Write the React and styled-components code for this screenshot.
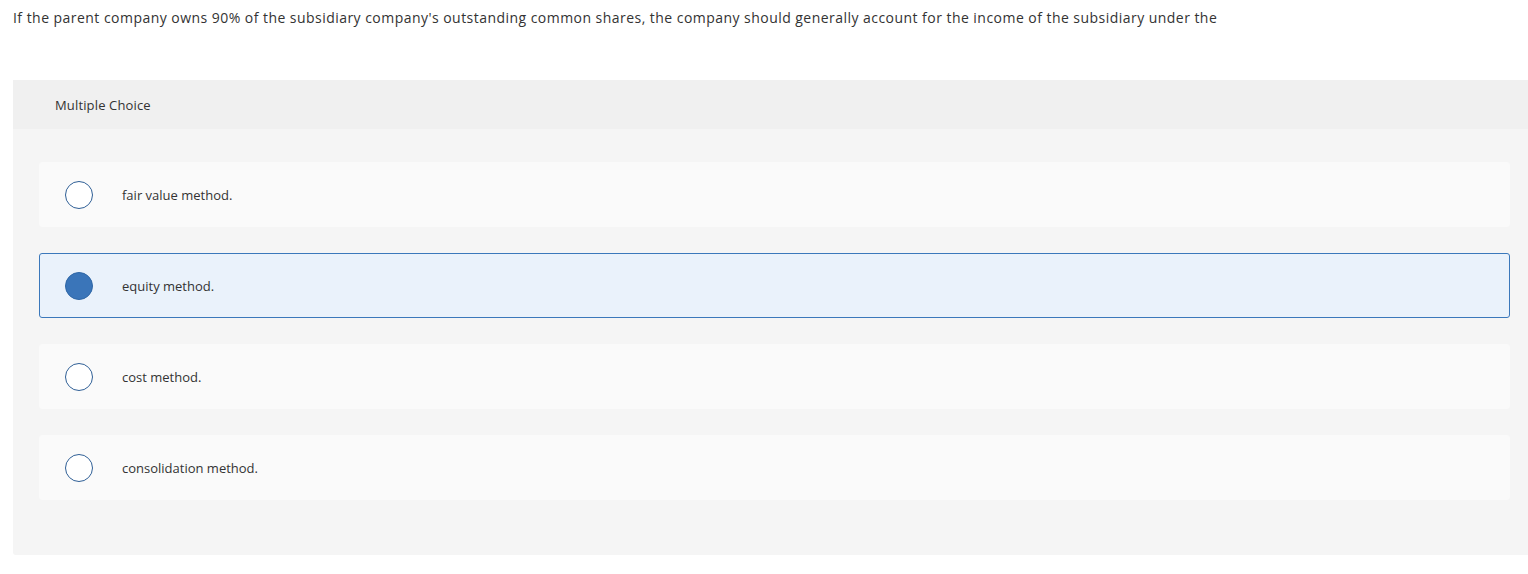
import React from 'react';
import styled, { createGlobalStyle } from "styled-components";

const options = [
    {id: 1, label: "fair value method.", selected: false},
    {id: 2, label: "equity method.", selected: true},
    {id: 3, label: "cost method.", selected: false},
    {id: 4, label: "consolidation method.", selected: false},
];

function App() {
    return (
        <Page>
            <GlobalStyle/>
            <Question>
                If the parent company owns 90% of the subsidiary company's outstanding common shares, the company should generally account for the income of the subsidiary under the
            </Question>
            <Panel>
                <PanelHeader>Multiple Choice</PanelHeader>
                <OptionList>
                    {options.map(o => (
                        <Option key={o.id} $selected={o.selected}>
                            <Radio $selected={o.selected}/>
                            <Label>{o.label}</Label>
                        </Option>
                    ))}
                </OptionList>
            </Panel>
        </Page>
    );
}

export default App;

const GlobalStyle = createGlobalStyle`
  html, body {
    margin: 0;
    padding: 0;
    background: #ffffff;
  }
  body {
    font-family: "Open Sans", "Lato", sans-serif;
    color: #333333;
  }
`;

const Page = styled.div`
  padding: 9px 0 0 13px;
  width: 1528px;
  box-sizing: border-box;
`;

const Question = styled.p`
  margin: 0;
  font-size: 14px;
  line-height: 18px;
  letter-spacing: 0.46px;
  color: #333;
`;

const Panel = styled.div`
  margin-top: 53px;
  background: #f5f5f5;
  border-radius: 0 0 0 3px;
  height: 475px;
`;

const PanelHeader = styled.div`
  height: 49px;
  background: #f0f0f0;
  display: flex;
  align-items: center;
  padding-left: 42px;
  font-size: 13px;
  letter-spacing: 0.15px;
  color: #333;
`;

const OptionList = styled.div`
  display: flex;
  flex-direction: column;
  gap: 26px;
  padding: 33px 18px 0 26px;
`;

const Option = styled.div`
  height: 65px;
  box-sizing: border-box;
  display: flex;
  align-items: center;
  padding-left: 25px;
  border-radius: 3px;
  background: ${p => p.$selected ? "#eaf2fb" : "#fafafa"};
  border: 1px solid ${p => p.$selected ? "#3b78bb" : "#fafafa"};
`;

const Radio = styled.span`
  width: 28px;
  height: 28px;
  box-sizing: border-box;
  border-radius: 50%;
  border: 1.5px solid ${p => p.$selected ? "#2f67a6" : "#2f5f96"};
  background: ${p => p.$selected ? "#3a75b9" : "#ffffff"};
  flex-shrink: 0;
`;

const Label = styled.span`
  margin-left: 29px;
  font-size: 13px;
  color: #333;
`;
